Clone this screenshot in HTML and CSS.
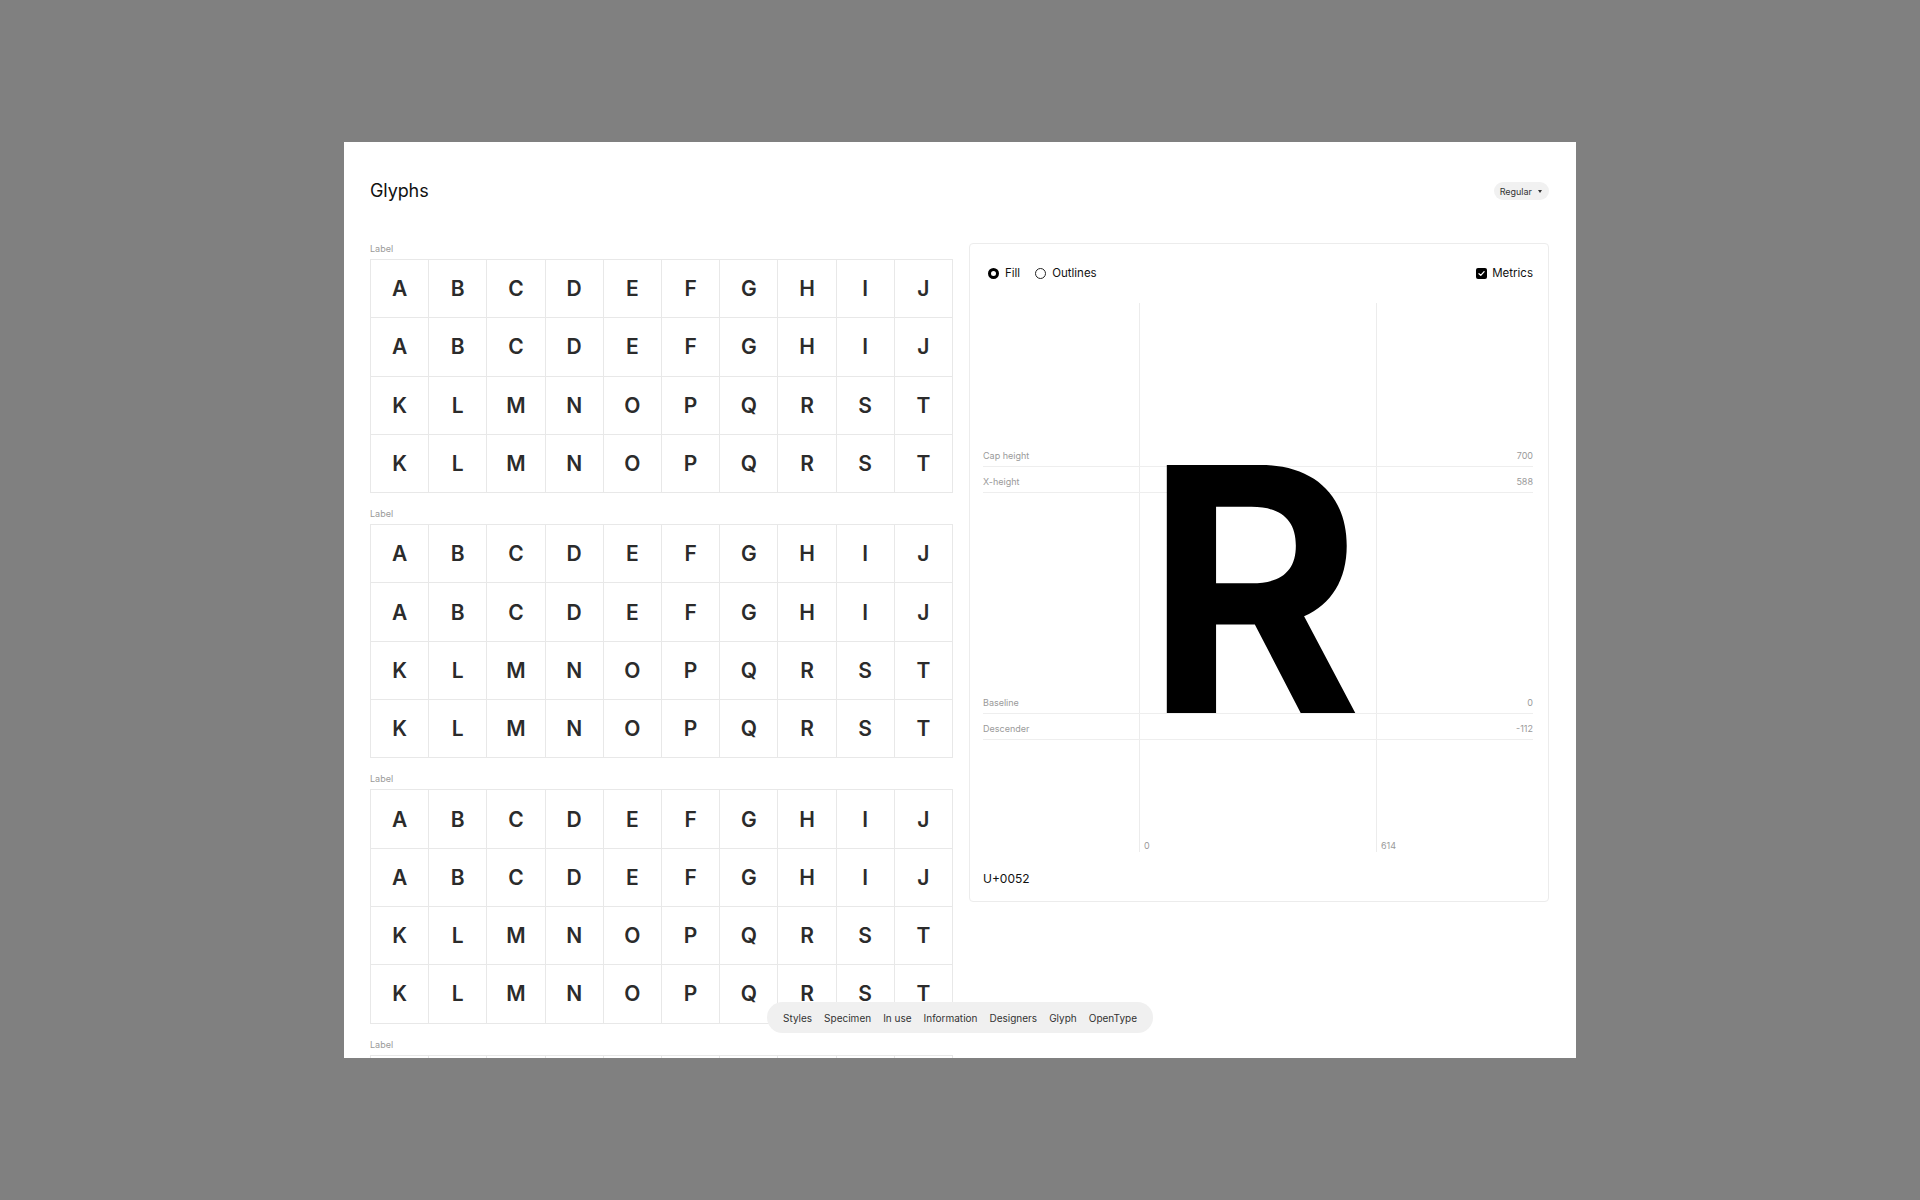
FILE: index.html
```html
<!DOCTYPE html>
<html lang="en">
    <head>
        <meta charset="UTF-8">
        <meta name="viewport" content="width=device-width, initial-scale=1.0">
        <title>Glyphs</title>
        <link rel="stylesheet" href="styles.css">
    </head>
    <body>
        <div class="panel">
            <div class="header">
                <h1>Glyphs</h1>
                <button class="style-select">Regular <span class="caret"></span></button>
            </div>

            <div class="main">
                <div class="sets" id="sets"></div>

                <div class="viewer">
                    <div class="controls">
                        <label class="radio checked"><span class="dot"></span>Fill</label>
                        <label class="radio"><span class="dot"></span>Outlines</label>
                        <label class="check"><span class="box">
                            <svg viewBox="0 0 10 10" width="9" height="9"><path d="M2.2 5.2 L4.2 7.1 L7.9 2.9" fill="none" stroke="#fff" stroke-width="1.4" stroke-linecap="round" stroke-linejoin="round"/></svg>
                        </span>Metrics</label>
                    </div>

                    <div class="canvas">
                        <div class="vline" style="left: 156px"><span>0</span></div>
                        <div class="vline" style="left: 393px"><span>614</span></div>

                        <div class="metric" style="top: 147px"><span>Cap height</span><span>700</span></div>
                        <div class="metric" style="top: 173px"><span>X-height</span><span>588</span></div>
                        <div class="metric" style="top: 394px"><span>Baseline</span><span>0</span></div>
                        <div class="metric" style="top: 420px"><span>Descender</span><span>-112</span></div>

                        <div class="glyph">R</div>
                    </div>

                    <div class="codepoint">U+0052</div>
                </div>
            </div>

            <nav class="tabs">
                <a href="#">Styles</a>
                <a href="#">Specimen</a>
                <a href="#">In use</a>
                <a href="#">Information</a>
                <a href="#">Designers</a>
                <a href="#">Glyph</a>
                <a href="#">OpenType</a>
            </nav>
        </div>

        <script>
            const sets = document.getElementById('sets');
            const rows = ['ABCDEFGHIJ', 'ABCDEFGHIJ', 'KLMNOPQRST', 'KLMNOPQRST'];

            // four identical glyph sets, the last one runs past the panel
            for (let s = 0; s < 4; s++) {
                const block = document.createElement('div');
                block.className = 'set';

                const label = document.createElement('div');
                label.className = 'set-label';
                label.textContent = 'Label';
                block.appendChild(label);

                const grid = document.createElement('div');
                grid.className = 'grid';
                rows.forEach(function(row) {
                    for (const ch of row) {
                        const cell = document.createElement('div');
                        cell.className = 'cell';
                        cell.textContent = ch;
                        grid.appendChild(cell);
                    }
                });
                block.appendChild(grid);
                sets.appendChild(block);
            }
        </script>
    </body>
</html>
```

FILE: styles.css
```css
* {
    margin: 0;
    padding: 0;
    box-sizing: border-box;
}

body {
    background-color: #808080;
    font-family: 'Inter', 'Liberation Sans', sans-serif;
    color: #111;
    min-height: 100vh;
}

.panel {
    position: relative;
    width: 1232px;
    height: 916px;
    margin: 142px auto 0;
    background-color: #fff;
    overflow: hidden;
    padding: 35px 27px 0 26px;
}

.header {
    display: flex;
    justify-content: space-between;
    align-items: center;
    height: 26px;
}

h1 {
    font-size: 18px;
    font-weight: 400;
    letter-spacing: -0.1px;
    color: #111;
}

.style-select {
    display: flex;
    align-items: center;
    gap: 6px;
    height: 18px;
    padding: 0 7px 0 6px;
    border: none;
    border-radius: 9px;
    background-color: #f1f1f1;
    font-family: inherit;
    font-size: 9px;
    color: #333;
    margin-top: 2px;
}

.caret {
    width: 0;
    height: 0;
    border-left: 2.5px solid transparent;
    border-right: 2.5px solid transparent;
    border-top: 3px solid #333;
}

.main {
    display: flex;
    gap: 16px;
    margin-top: 40px;
    align-items: flex-start;
}

/* glyph sets */

.sets {
    width: 583px;
    flex: 0 0 auto;
}

.set {
    margin-bottom: 15px;
}

.set-label {
    font-size: 9px;
    line-height: 12px;
    color: #9a9a9a;
    margin-bottom: 4px;
}

.grid {
    display: grid;
    grid-template-columns: repeat(10, 1fr);
    border-top: 1px solid #e8e8e8;
    border-left: 1px solid #e8e8e8;
}

.cell {
    height: 58.3px;
    display: flex;
    align-items: center;
    justify-content: center;
    border-right: 1px solid #e8e8e8;
    border-bottom: 1px solid #e8e8e8;
    font-size: 21px;
    font-weight: 600;
    color: #2b2b2b;
}

/* viewer card */

.viewer {
    width: 580px;
    height: 659px;
    border: 1px solid #ececec;
    border-radius: 4px;
    padding: 0 15px 0 13px;
}

.controls {
    display: flex;
    align-items: center;
    gap: 15px;
    height: 16px;
    margin-top: 21px;
    padding-left: 5px;
    font-size: 11.5px;
    color: #111;
}

.radio,
.check {
    display: flex;
    align-items: center;
    gap: 6px;
}

.check {
    margin-left: auto;
    gap: 5px;
}

.dot {
    width: 11px;
    height: 11px;
    border-radius: 50%;
    border: 1px solid #222;
}

.radio.checked .dot {
    border: 3px solid #000;
}

.box {
    width: 11px;
    height: 11px;
    border-radius: 2px;
    background-color: #000;
    display: flex;
    align-items: center;
    justify-content: center;
}

.canvas {
    position: relative;
    height: 549px;
    margin-top: 22px;
}

.vline {
    position: absolute;
    top: 0;
    bottom: 0;
    width: 1px;
    background-color: #ececec;
}

.vline span {
    position: absolute;
    bottom: 0;
    left: 5px;
    font-size: 9px;
    line-height: 12px;
    color: #9a9a9a;
}

.metric {
    position: absolute;
    left: 0;
    right: 0;
    display: flex;
    justify-content: space-between;
    font-size: 9px;
    line-height: 12px;
    padding-bottom: 4px;
    border-bottom: 1.5px solid #eeeeee;
    color: #9a9a9a;
}

.glyph {
    position: absolute;
    left: 162px;
    top: 116px;
    font-size: 341px;
    line-height: 1;
    font-weight: 700;
    letter-spacing: 0;
    transform: scaleX(0.97);
    transform-origin: left center;
    color: #000;
}

.codepoint {
    margin-top: 19px;
    font-size: 12px;
    color: #111;
}

/* bottom tab bar */

.tabs {
    position: absolute;
    left: 50%;
    bottom: 25px;
    transform: translateX(-50%);
    display: flex;
    align-items: center;
    gap: 12px;
    height: 31px;
    padding: 0 16px;
    border-radius: 16px;
    background-color: #f0f0f0;
}

.tabs a {
    font-size: 10px;
    color: #333;
    text-decoration: none;
    white-space: nowrap;
}
```
